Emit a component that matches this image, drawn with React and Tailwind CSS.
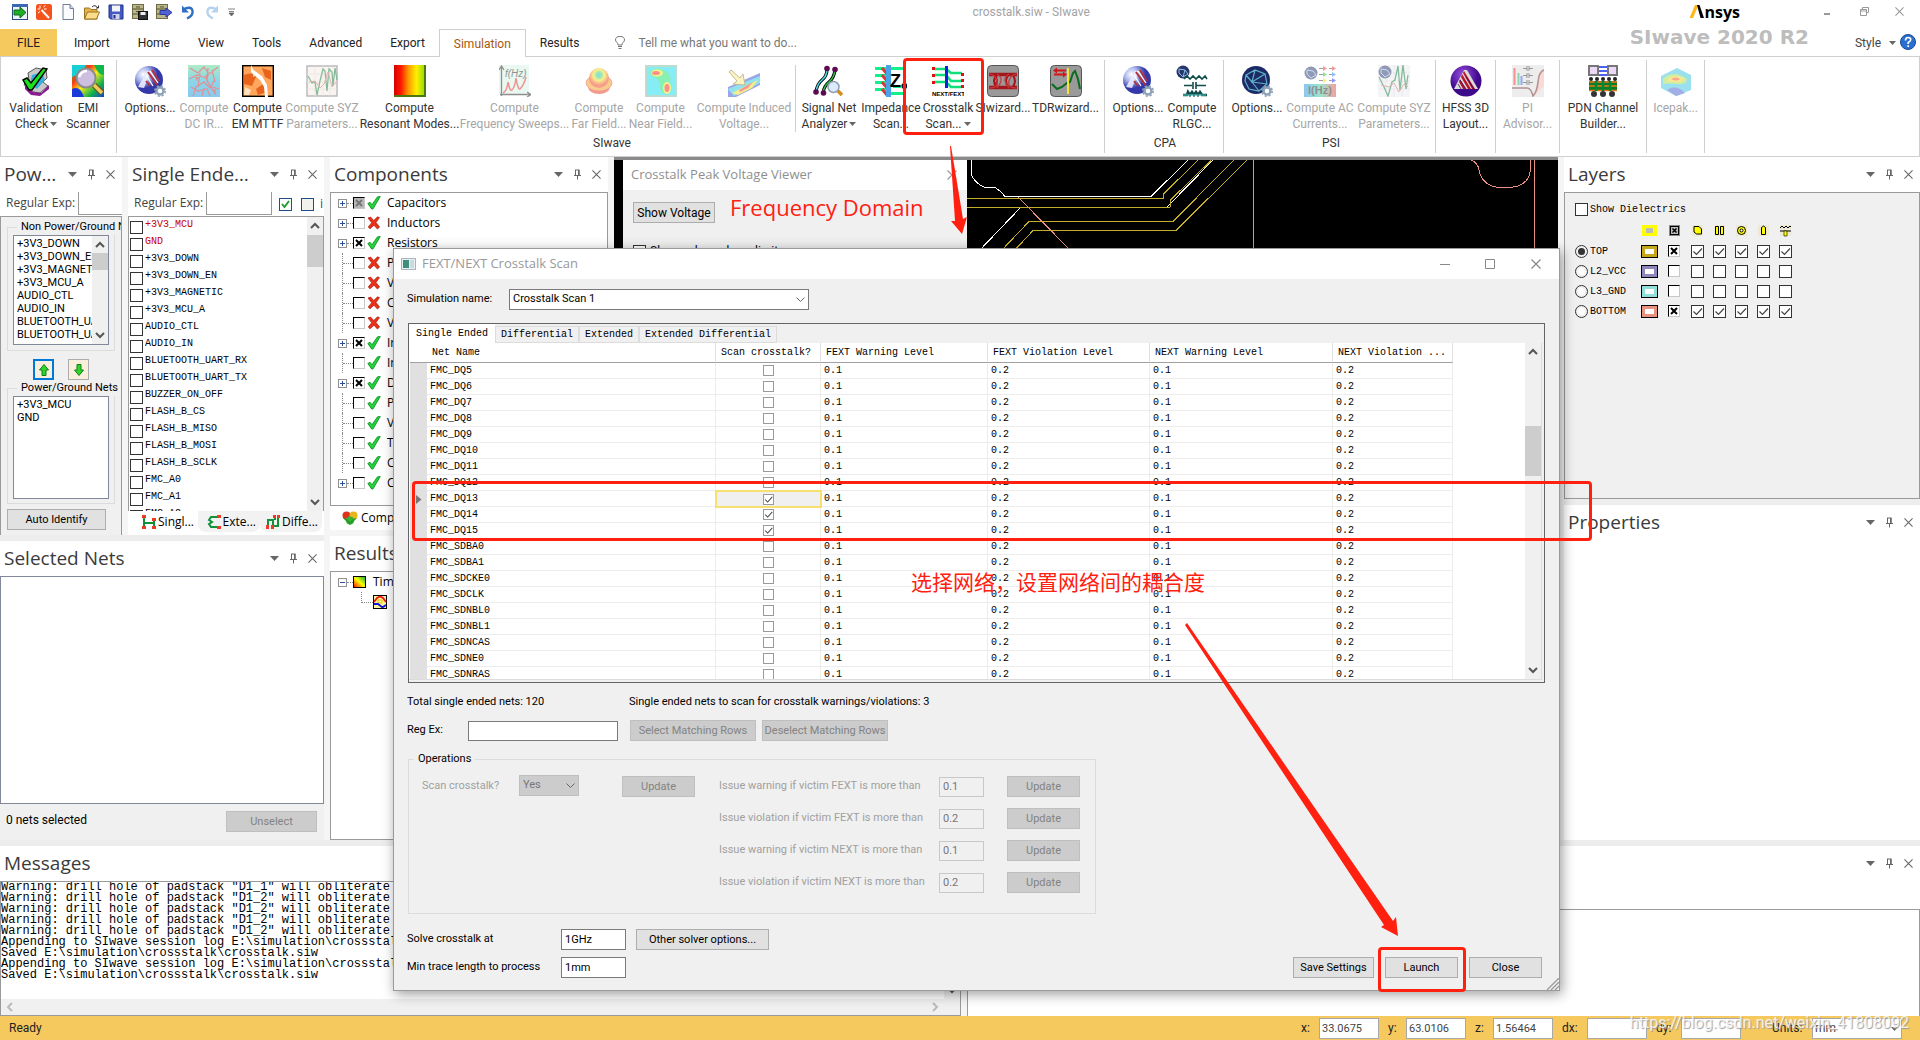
import { useState } from 'react';
import clsx from 'clsx';

const MONO = "font-['Liberation_Mono',monospace] text-[10px]";
const WIDE = "font-['Open_Sans','Noto_Sans_CJK_SC',sans-serif]";
const BTN = 'h-[21px] shrink-0 whitespace-nowrap border border-[#adadad] bg-[#e1e1e1] text-center text-[11px] leading-4 text-black';
const BTN_OFF = 'h-[21px] shrink-0 whitespace-nowrap border border-[#bfbfbf] bg-[#cccccc] text-center text-[11px] leading-4 text-[#838383]';

/* ---------- small icons ---------- */

const Tri = ({ className = 'text-[#666]' }) => (
    <svg width="7" height="4" viewBox="0 0 7 4" className={className}><path d="M0 0h7L3.5 4z" fill="currentColor" /></svg>
);

const Chevron = ({ dir = 'down', className = 'text-[#555]' }) => {
    const d = {
        down: 'M1 3l4 4 4-4',
        up: 'M1 7l4-4 4 4',
        left: 'M7 1L3 5l4 4',
        right: 'M3 1l4 4-4 4',
    }[dir];
    return <svg width="10" height="10" viewBox="0 0 10 10" className={className}><path d={d} fill="none" stroke="currentColor" strokeWidth="2" /></svg>;
};

const ThinChevron = () => (
    <svg width="9" height="6" viewBox="0 0 9 6" className="pointer-events-none absolute right-[4px] top-1/2 -translate-y-1/2"><path d="M.5.5l4 4 4-4" fill="none" stroke="#666" /></svg>
);

const Cross = ({ size = 10, className = 'text-[#666]' }) => (
    <svg width={size} height={size} viewBox="0 0 10 10" className={className}><path d="M.5.5l9 9M9.5.5l-9 9" stroke="currentColor" strokeWidth="1.2" /></svg>
);

const Pin = () => (
    <svg width="9" height="11" viewBox="0 0 9 11"><path d="M2.500 1v5M6 1v5M1 6.500h7M2 1h4.500M4.500 7v3.500" stroke="#666" fill="none" /><path d="M5 1h1.500v5H5z" fill="#666" /></svg>
);

const GreenCheck = () => (
    <svg width="14" height="14" viewBox="0 0 14 14"><path d="M.8 7.500l2.200-1.300L5 8.700 10.500.8l2.800-.3L6 13H4.600z" fill="#1fd43a" stroke="#0b8a1e" strokeWidth=".8" /></svg>
);

const RedCross = () => (
    <svg width="14" height="14" viewBox="0 0 14 14"><path d="M1 2l2.500-1 3.300 3.500L10.500.8l2 .8L9 6.500l3.600 4.500-2.200 2L7 9.200l-4 3.600L1.200 11l3.500-4.300z" fill="#e8301a" stroke="#a91c0c" strokeWidth=".7" /></svg>
);

const ArrowUpDown = ({ down }) => (
    <svg width="14" height="14" viewBox="0 0 14 14" className={clsx(down && 'rotate-180')}><path d="M7 1.500L11.500 7H9v5.500H5V7H2.500z" fill="#2fd32f" stroke="#138013" /></svg>
);

/* ---------- controls ---------- */

const CheckBox = ({ checked = false, label, id, size = 'md' }) => {
    const [on, setOn] = useState(checked);
    return (
        <span className={clsx('relative inline-flex shrink-0', size === 'md' ? 'size-[13px]' : 'size-[11px]')}>
            <input
                id={id}
                type="checkbox"
                aria-label={label}
                checked={on}
                onChange={() => setOn(!on)}
                className={clsx('size-full appearance-none border bg-white', size === 'md' ? 'border-[#333]' : 'border-[#9a9a9a]')}
            />
            {on && (
                <svg viewBox="0 0 13 13" className="pointer-events-none absolute inset-0 size-full"><path d="M2.500 6.500l3 3 5.500-6" fill="none" stroke="#444" strokeWidth="1.200" /></svg>
            )}
        </span>
    );
};

// sunken tick box that shows a bold cross
const XBox = ({ checked = false, dim = false, label }) => {
    const [on, setOn] = useState(checked);
    return (
        <span className="relative inline-flex size-[12px] shrink-0">
            <input
                type="checkbox"
                aria-label={label}
                checked={on}
                onChange={() => setOn(!on)}
                className={clsx('size-full appearance-none border border-b-[#c8c8c8] border-l-black border-r-[#c8c8c8] border-t-black', dim ? 'bg-[#b8b8b8]' : 'bg-white')}
            />
            {on && (
                <svg viewBox="0 0 12 12" className="pointer-events-none absolute inset-0 size-full"><path d="M3 3l6 6M9 3l-6 6" stroke={dim ? '#777' : '#000'} strokeWidth="2" /></svg>
            )}
        </span>
    );
};

const PanelTitle = ({ children }) => (
    <div className="flex h-[35px] shrink-0 items-center bg-white pb-px pl-1 pr-[2px]">
        <h2 className={clsx('mr-[5px] min-w-0 flex-1 truncate text-[19px] leading-7 text-[#3b3b3b]', WIDE)}>{children}</h2>
        <button aria-label="Panel menu" className="flex w-[19px] justify-center"><svg width="9" height="5" viewBox="0 0 9 5"><path d="M0 0h9L4.500 5z" fill="#666" /></svg></button>
        <button aria-label="Pin panel" className="flex w-[19px] justify-center"><Pin /></button>
        <button aria-label="Close panel" className="flex w-[19px] justify-center"><Cross size={9} /></button>
    </div>
);

const VScroll = ({ thumb, className }) => (
    <div className={clsx('flex w-[16px] shrink-0 flex-col items-center bg-[#f0f0f0] py-1', className)}>
        <Chevron dir="up" />
        <div className="flex w-full flex-1 flex-col">{thumb}</div>
        <Chevron dir="down" />
    </div>
);

/* ---------- ribbon icons, 32 x 32 ---------- */

const Svg = ({ children }) => <svg width="32" height="32" viewBox="0 0 32 32">{children}</svg>;

const Gear = () => (
    <g>
        <circle cx="26" cy="26" r="3.500" fill="#fff" stroke="#8fa3b8" strokeWidth="2.500" />
        <circle cx="26" cy="26" r="5.200" fill="none" stroke="#8fa3b8" strokeWidth="1.600" strokeDasharray="2.200 1.900" />
    </g>
);

const ICONS = {
    validation: (
        <Svg>
            <path d="M8 8l8-5 10 2 1 8-4 4 5 4-8 7-12-2-4-7 5-4z" fill="#c9c9c9" stroke="#555" />
            <path d="M5 21l8 6 8 1 8-8v4l-9 7-9-1-6-6z" fill="#8c1a93" />
            <path d="M12 10l10-3 3 8-8 9-7-5z" fill="#3aaedb" />
            <path d="M3 15l4-2 4 5L23 3l4 1-15 21h-3z" fill="#1be01b" stroke="#000" strokeWidth="1.400" />
        </Svg>
    ),
    emi: (
        <Svg>
            <defs>
                <linearGradient id="emiA" x1="0" y1="0" x2="1" y2="1"><stop offset="0" stopColor="#13c53a" /><stop offset=".3" stopColor="#ff3b12" /><stop offset=".5" stopColor="#f5ee1d" /><stop offset=".75" stopColor="#12b34a" /><stop offset="1" stopColor="#143fd1" /></linearGradient>
            </defs>
            <rect width="32" height="32" fill="url(#emiA)" />
            <path d="M0 0h14l-4 8-10 4z" fill="#19cfd6" /><path d="M0 24q8-4 12 8H0z" fill="#1a39d8" /><path d="M22 0h10v10q-6 0-10-10z" fill="#10b84b" />
            <path d="M22 20l8 8" stroke="#6b5413" strokeWidth="6" /><path d="M22 20l8 8" stroke="#f0c95b" strokeWidth="3.500" />
            <circle cx="14" cy="13" r="9.500" fill="#cdbfe0" stroke="#8b8b8b" strokeWidth="2" />
            <path d="M7 12q2-6 8-6" stroke="#fff" strokeWidth="2.500" fill="none" />
        </Svg>
    ),
    options: (
        <Svg>
            <defs><radialGradient id="optA" cx=".3" cy=".3"><stop offset="0" stopColor="#fff" /><stop offset=".5" stopColor="#aab6ec" /><stop offset="1" stopColor="#3438a8" /></radialGradient></defs>
            <circle cx="15" cy="15" r="14" fill="url(#optA)" />
            <path d="M4 22L13 6l4 0-7 17z" fill="#e9ecff" opacity=".9" />
            <path d="M14 7l9 13M18 5l7 11" stroke="#b3323b" strokeWidth="2" /><path d="M12 10l7 11M16 6l8 12" stroke="#fff" strokeWidth="1.300" />
            <path d="M12 16l4 5" stroke="#b3323b" strokeWidth="2" />
            <Gear />
        </Svg>
    ),
    dcir: (
        <Svg>
            <defs><linearGradient id="dcA" x1="0" y1="0" x2="0" y2="1"><stop offset="0" stopColor="#5fd98f" /><stop offset=".5" stopColor="#1aaed0" /><stop offset="1" stopColor="#1797df" /></linearGradient></defs>
            <rect width="32" height="32" fill="url(#dcA)" />
            <path d="M2 3l8 5 6-6 5 7 9-7M1 14l8-4 9 3 4 8 9 3M5 31l3-9 8-5 6 6 5-9M12 8l-2 14M20 3l-1 13 9 14M3 22l7 4 9-2 3 7M14 31l2-8M24 5l3 12" fill="none" stroke="#c9222d" strokeWidth="1.200" />
            <path d="M7 12l2 4 2-4zM17 10l2 4 2-4zM24 25l3 4 1-5z" fill="#c9222d" />
        </Svg>
    ),
    mttf: (
        <Svg>
            <rect x=".7" y=".7" width="30.600" height="30.600" fill="#ffa75c" stroke="#000" strokeWidth="1.400" />
            <path d="M2 10q8-4 12 2l-4 9-8-2zM20 3l9 3v9l-6-3zM14 24l7-5 4 8-9 3z" fill="#e8641c" /><path d="M3 22l6 3-2 5H2zM12 5l5 4-6 3z" fill="#ffe2c2" />
            <path d="M9 0l3 6 8 5 5 9 1 12h-3l-1-10-4-7-9-8V0z" fill="#fff" />
        </Svg>
    ),
    syz: (
        <Svg>
            <rect x="1" y="1" width="30" height="30" fill="#f4ebe4" stroke="#777" strokeWidth="1.500" />
            <path d="M1 9h30M1 17h30M1 24h30M9 1v30M17 1v30M24 1v30" stroke="#d9cfc6" strokeWidth=".7" />
            <path d="M2 11l4 7 3-1 2 13 3-14 3-12 2 2 2 20 2-22 3 3 1 14 2-18 2 12" fill="none" stroke="#0c7a33" strokeWidth="1.300" />
            <path d="M3 17l6-1 5 7 4-4 4-12 4 15 5-6" fill="none" stroke="#c66" />
        </Svg>
    ),
    resonant: (
        <Svg>
            <defs><linearGradient id="resA"><stop offset="0" stopColor="#d60000" /><stop offset=".22" stopColor="#ff1a00" /><stop offset=".45" stopColor="#ff9a00" /><stop offset=".7" stopColor="#fff000" /><stop offset="1" stopColor="#86d800" /></linearGradient></defs>
            <rect width="32" height="32" fill="url(#resA)" />
            <path d="M31 0v32M0 31h32" stroke="#4b7a12" strokeWidth="2" />
        </Svg>
    ),
    freq: (
        <Svg>
            <rect width="30" height="30" fill="#d4f5e4" />
            <path d="M2.500 31V2M1 29.500h30M0 5l2.500-4L5 5M28 27l4 2.500-4 2.500" fill="none" stroke="#222" strokeWidth="1.300" />
            <path d="M4 28q4-2 5-11 2 10 4 8 3-3 4-12 2 12 4 11 4-4 6-12" fill="none" stroke="#e8262a" strokeWidth="1.500" />
            <text x="6" y="12" className="font-['Liberation_Sans',sans-serif] text-[10px] italic" fill="#222">f(Hz)</text>
        </Svg>
    ),
    far: (
        <Svg>
            <defs><radialGradient id="farA" cx=".5" cy=".35"><stop offset="0" stopColor="#2aa9e0" /><stop offset=".25" stopColor="#2bd36d" /><stop offset=".55" stopColor="#f6e31b" /><stop offset="1" stopColor="#f0401a" /></radialGradient></defs>
            <ellipse cx="16" cy="22" rx="11" ry="7" fill="#e8391d" />
            <ellipse cx="16" cy="18" rx="13" ry="8" fill="#f59a1c" stroke="#d33" strokeWidth=".7" />
            <circle cx="16" cy="13" r="10" fill="url(#farA)" />
        </Svg>
    ),
    near: (
        <Svg>
            <rect width="32" height="32" fill="#7fb8a0" /><rect x="2" y="2" width="28" height="28" fill="#10dcf0" />
            <path d="M4 7q8-7 18 0 5 4 3 10 4 10-3 12-8 0-7-10-2-6-9-8z" fill="#16e36a" />
            <ellipse cx="12" cy="8" rx="6" ry="3.500" fill="#f0e51e" /><ellipse cx="11" cy="8" rx="4" ry="2" fill="#f02a1a" />
            <ellipse cx="22" cy="23" rx="4" ry="6" fill="#f0e51e" /><ellipse cx="22" cy="23" rx="2.500" ry="4" fill="#f02a1a" />
        </Svg>
    ),
    induced: (
        <Svg>
            <path d="M0 22L32 8v12L8 32H0z" fill="#3c4fd0" /><path d="M0 24l32-13v7L6 31z" fill="#23c9dd" /><path d="M4 28l26-13-6 8-14 7z" fill="#f3dd1c" /><path d="M11 25l14-8-5 6-8 4z" fill="#ef3a1a" />
            <path d="M1 7l2-2 9 8 3-4 2 11-12-1 4-3z" fill="#fbe98c" stroke="#8c7a22" />
        </Svg>
    ),
    signal: (
        <Svg>
            <path d="M14 4q0 7-5 11T3 27M22 5q-1 8-6 12t-6 11" fill="none" stroke="#000" strokeWidth="3.200" />
            <path d="M14 4q0 7-5 11T3 27" fill="none" stroke="#4ed9e0" strokeWidth="1.600" /><path d="M22 5q-1 8-6 12t-6 11" fill="none" stroke="#2fbf4a" strokeWidth="1.600" />
            <circle cx="14" cy="3.500" r="2.800" fill="#5b0a52" /><circle cx="22" cy="4.500" r="2.800" fill="#5b0a52" /><circle cx="3" cy="27" r="2.800" fill="#5b0a52" /><circle cx="10.500" cy="28" r="2.800" fill="#5b0a52" />
            <path d="M24 25l5 5" stroke="#d58c1d" strokeWidth="3.500" /><circle cx="20.500" cy="22" r="5.500" fill="#dcebfb" stroke="#8ea0b5" strokeWidth="1.500" />
        </Svg>
    ),
    impedance: (
        <Svg>
            <path d="M0 3.500h30M0 10.500h12M0 17.500h12M0 24.500h12M16 28.500h14M18 21.500h8" stroke="#10f08c" strokeWidth="3" />
            <path d="M7 3l6 7M7 10l6 7M7 17l6 7M7 24l5 6" stroke="#d33a3a" strokeWidth="3" />
            <rect x="11" y="0" width="5" height="32" fill="#4aa3e6" />
            <text x="15" y="22" className="font-['Liberation_Sans',sans-serif] text-[18px] font-bold" fill="#000">Z</text>
            <text x="26" y="24" className="font-['Liberation_Sans',sans-serif] text-[11px] font-bold" fill="#000">o</text>
        </Svg>
    ),
    crosstalk: (
        <Svg>
            <path d="M2 4h12l5 4h11M2 10h12l5 6h11M2 17h12l5 5h11" fill="none" stroke="#10e07c" strokeWidth="2.600" />
            <rect x="13" y="1" width="3" height="22" fill="#1020e0" />
            <path d="M0 2h3v3H0zM0 9h3v3H0zM0 16h3v3H0zM29 8h3v3h-3zM29 14h3v3h-3zM29 20h3v3h-3z" fill="#e01010" />
            <text x="0" y="31" className="font-['Liberation_Sans',sans-serif] text-[6px] font-bold" fill="#000">NEXT/FEXT</text>
        </Svg>
    ),
    siwizard: (
        <Svg>
            <rect x=".5" y=".5" width="31" height="31" rx="4" fill="#9a9a9a" stroke="#555" />
            <path d="M2 9.500h28M2 22.500h28" stroke="#a3161b" strokeWidth="3.500" />
            <path d="M7 9q6 7 0 14M10 9q-6 7 0 14M22 9q-6 7 0 14M25 9q6 7 0 14" fill="none" stroke="#a3161b" strokeWidth="2" />
            <path d="M2 9q6 0 8 7t-8 7M30 9q-6 0-8 7t8 7M10 9q5 3 4 7t-4 7M22 9q-5 3-4 7t4 7" fill="none" stroke="#c8383c" strokeWidth="1.200" />
        </Svg>
    ),
    tdr: (
        <Svg>
            <rect x=".5" y=".5" width="31" height="31" rx="4" fill="#9a9a9a" stroke="#555" />
            <path d="M2 19l5 5 5-2 5-4 3-1 3-9 2-2 3 8 2 10" fill="none" stroke="#0a6b1c" strokeWidth="2" />
            <path d="M18 3v26" stroke="#f5e23a" strokeWidth="2" />
            <path d="M6 5.500h10M4 9.500h10" stroke="#d11515" strokeWidth="2" /><path d="M7 2.500v6L3 5.500zM13 6.500v6l4-3z" fill="#d11515" />
        </Svg>
    ),
    rlgc: (
        <Svg>
            <circle cx="7" cy="7" r="6.500" fill="#26356b" /><path d="M3 4l6 1 3 4-5 3-4-4zM9 5l-2 7" fill="none" stroke="#8fc3e8" />
            <path d="M8 14l3-3 3 3 3-3 3 3 3-3 3 3 3-3 2 3M8 20.500h8M20 20.500h10M17 17v7M20 17v7" fill="none" stroke="#114b4b" strokeWidth="1.600" />
            <path d="M7 30h4l1-3 2 3 2-3 2 3 2-3 2 3 2-3 2 3h5" fill="none" stroke="#114b4b" strokeWidth="2.600" /><path d="M7 30h23" stroke="#54cfc4" />
        </Svg>
    ),
    psiOptions: (
        <Svg>
            <circle cx="15" cy="15" r="14" fill="#1c2a66" />
            <path d="M5 10l9-5 10 4 2 10-8 7-10-2-4-8zM14 5l-3 12 13-8M11 17l7 9M11 17l15 2M11 17l-6-7" fill="none" stroke="#5fb3c8" strokeWidth="1.200" />
            <Gear />
        </Svg>
    ),
    accur: (
        <Svg>
            <circle cx="7" cy="8" r="6.500" fill="#26356b" /><path d="M3 5l6 1 3 4-5 3-4-4z" fill="none" stroke="#8fc3e8" />
            <path d="M15 3.500h6M15 9.500h6M15 15.500h6M25 3.500h5M25 9.500h5M25 15.500h5" stroke="#444" />
            <path d="M19 1l4 2.500L19 6zM28 1l4 2.500L28 6z" fill="#e33" /><path d="M19 7l4 2.500-4 2.500z" fill="#1c3" /><path d="M28 7l4 2.500-4 2.500z" fill="#28e" /><path d="M19 13l4 2.500-4 2.500z" fill="#fd0" /><path d="M28 13l4 2.500-4 2.500z" fill="#23e" />
            <defs><linearGradient id="acA"><stop offset="0" stopColor="#1e90e0" /><stop offset=".5" stopColor="#3c9" /><stop offset="1" stopColor="#e44" /></linearGradient></defs>
            <rect y="19" width="32" height="13" fill="url(#acA)" />
            <text x="4" y="29" className="font-['Liberation_Sans',sans-serif] text-[11px] font-bold" fill="#222">I(Hz)</text>
        </Svg>
    ),
    psiSyz: (
        <Svg>
            <rect width="32" height="32" fill="#ececf2" /><path d="M0 8h32M0 16h32M0 24h32M8 0v32M16 0v32M24 0v32" stroke="#ccd" strokeWidth=".7" />
            <path d="M1 12l5 10 4 9 4-14 3-2 3-14 2 24 3-25 3 24 2-14" fill="none" stroke="#0c7a33" strokeWidth="1.300" /><path d="M3 20l8 2 5-4 5 9 5-8 4 3" fill="none" stroke="#c66" />
            <circle cx="7" cy="7" r="6.500" fill="#26356b" /><path d="M3 4l6 1 3 4-5 3-4-4z" fill="none" stroke="#8fc3e8" />
        </Svg>
    ),
    hfss: (
        <Svg>
            <defs><radialGradient id="hfA" cx=".4" cy=".3"><stop offset="0" stopColor="#9c4fe0" /><stop offset="1" stopColor="#3d0a8c" /></radialGradient></defs>
            <circle cx="16" cy="16" r="15.500" fill="url(#hfA)" />
            <path d="M4 24L14 5h3l11 19z" fill="#dcdcdc" />
            <path d="M10 14l6 10h-3l-4-7zM12 9l9 15h-3l-7-12zM14 6l11 18h-3L13 8z" fill="#b9152a" />
            <path d="M8 19l3 5M16 12l8 12M10 15l6 9" stroke="#3d0a5c" strokeWidth=".8" />
        </Svg>
    ),
    pi: (
        <Svg>
            <rect width="32" height="32" fill="#dcdcdc" /><path d="M2.500 3v17" stroke="#e22" strokeWidth="2" /><path d="M6.500 8v12" stroke="#2a6" strokeWidth="2" /><path d="M9.500 11v9" stroke="#25e" strokeWidth="2" />
            <path d="M11 3.500h4M17 3.500h4M15 1v5M17 1v5M11 10.500h4M17 10.500h4M15 8v5M17 8v5M11 17.500h4M17 17.500h4M15 15v5M17 15v5" stroke="#333" />
            <path d="M32 3q-6 2-6 14l-4 14 10-10z" fill="#f3b7b0" /><path d="M0 23h15q4 0 6 8 4-4 5-14t6-12" fill="none" stroke="#6b2a2a" strokeWidth="1.600" />
        </Svg>
    ),
    pdn: (
        <Svg>
            <rect x="2" y="1" width="9" height="9" fill="#ecd9f7" stroke="#777" strokeWidth="2" /><rect x="21" y="1" width="9" height="9" fill="#ecd9f7" stroke="#777" strokeWidth="2" />
            <path d="M12 2h8M12 6h8M12 10h8" stroke="#1430e8" strokeWidth="1.600" />
            <path d="M4 14h.01M10 14h.01M16 14h.01M22 14h.01M28 14h.01" stroke="#222" strokeWidth="4" strokeLinecap="round" />
            <rect x="2" y="16" width="28" height="10" fill="#0b7d25" /><path d="M2 17h28M2 21h28M2 25.500h28" stroke="#f07a1a" strokeWidth="1.400" /><path d="M9 16v10M16 16v10M23 16v10" stroke="#083" strokeWidth="2.500" />
            <circle cx="7" cy="29" r="3" fill="#333" /><circle cx="16" cy="29" r="3" fill="#333" /><circle cx="25" cy="29" r="3" fill="#333" />
        </Svg>
    ),
    icepak: (
        <Svg>
            <path d="M17 3l14 7v15l-15 6-15-8V11z" fill="#39c3df" /><path d="M3 14q10-10 24 0 0 6-10 5T3 19z" fill="#9fdf4a" /><path d="M8 14q8-6 16 0-2 4-8 3t-8 0z" fill="#f7d02a" /><path d="M11 14q5-3 9 0-3 3-9 0z" fill="#f0502a" /><path d="M7 25q9-6 18 3l-9 3z" fill="#4a5fd0" />
        </Svg>
    ),
};

const RIBBON = [
    {
        pad: 'pl-[7px] pr-1',
        items: [
            { icon: 'validation', a: 'Validation', b: 'Check', drop: true, w: 'w-[56px]' },
            { icon: 'emi', a: 'EMI', b: 'Scanner', w: 'w-[48px]' },
        ],
    },
    {
        name: 'SIwave',
        pad: 'pl-[6px] pr-[3px]',
        items: [
            { icon: 'options', a: 'Options...', w: 'w-[54px]' },
            { icon: 'dcir', a: 'Compute', b: 'DC IR...', off: true, w: 'w-[54px]' },
            { icon: 'mttf', a: 'Compute', b: 'EM MTTF', w: 'w-[53px]' },
            { icon: 'syz', a: 'Compute SYZ', b: 'Parameters...', off: true, w: 'w-[76px]' },
            { icon: 'resonant', a: 'Compute', b: 'Resonant Modes...', w: 'w-[99px]' },
            { icon: 'freq', a: 'Compute', b: 'Frequency Sweeps...', off: true, w: 'w-[111px]' },
            { icon: 'far', a: 'Compute', b: 'Far Field...', off: true, w: 'w-[58px]' },
            { icon: 'near', a: 'Compute', b: 'Near Field...', off: true, w: 'w-[65px]' },
            { icon: 'induced', a: 'Compute Induced', b: 'Voltage...', off: true, w: 'w-[102px]', bar: true },
            { icon: 'signal', a: 'Signal Net', b: 'Analyzer', drop: true, w: 'w-[66px]' },
            { icon: 'impedance', a: 'Impedance', b: 'Scan...', w: 'w-[58px]' },
            { icon: 'crosstalk', a: 'Crosstalk', b: 'Scan...', drop: true, w: 'w-[56px]' },
            { icon: 'siwizard', a: 'SIwizard...', w: 'w-[54px]' },
            { icon: 'tdr', a: 'TDRwizard...', w: 'w-[71px]' },
        ],
    },
    {
        name: 'CPA',
        pad: 'pl-[6px] pr-1',
        items: [
            { icon: 'options', a: 'Options...', w: 'w-[54px]' },
            { icon: 'rlgc', a: 'Compute', b: 'RLGC...', w: 'w-[54px]' },
        ],
    },
    {
        name: 'PSI',
        pad: 'pl-[6px] pr-[3px]',
        items: [
            { icon: 'psiOptions', a: 'Options...', w: 'w-[54px]' },
            { icon: 'accur', a: 'Compute AC', b: 'Currents...', off: true, w: 'w-[72px]' },
            { icon: 'psiSyz', a: 'Compute SYZ', b: 'Parameters...', off: true, w: 'w-[76px]' },
        ],
    },
    { pad: 'px-[3px]', items: [{ icon: 'hfss', a: 'HFSS 3D', b: 'Layout...', w: 'w-[53px]' }] },
    { pad: 'px-1', items: [{ icon: 'pi', a: 'PI', b: 'Advisor...', off: true, w: 'w-[55px]' }] },
    { pad: 'px-[5px]', items: [{ icon: 'pdn', a: 'PDN Channel', b: 'Builder...', w: 'w-[76px]' }] },
    { pad: 'px-1', items: [{ icon: 'icepak', a: 'Icepak...', off: true, w: 'w-[49px]' }] },
];

const RibbonButton = ({ item }) => (
    <button
        disabled={item.off}
        className={clsx('flex shrink-0 flex-col items-center whitespace-nowrap text-[12px] leading-4', item.w, item.off ? 'text-[#a6a6a6]' : 'text-[#333]')}
    >
        <span className={clsx(item.off && 'opacity-50')}>{ICONS[item.icon]}</span>
        <span className="mt-[3px]">{item.a}</span>
        <span className="flex h-4 items-center gap-[2px]">
            {item.b}
            {item.drop && <Tri />}
        </span>
    </button>
);

const Ribbon = () => (
    <div className="flex h-[100px] shrink-0 border-x border-b border-[#cfcfcf] bg-white pt-[3px]">
        {RIBBON.map((group, i) => (
            <div key={i} className={clsx('mb-[3px] flex flex-col border-r border-[#cfcfcf] pt-[5px]', group.pad)}>
                <div className="flex">
                    {group.items.map((item, k) => (
                        <div key={k} className={clsx('flex', item.bar && 'border-r border-[#cfcfcf]')}>
                            <RibbonButton item={item} />
                        </div>
                    ))}
                </div>
                {group.name && <div className="mt-[3px] text-center text-[12px] leading-4 text-[#333]">{group.name}</div>}
            </div>
        ))}
    </div>
);

/* ---------- header ---------- */

const QUICK = [
    ['Open project', <svg width="16" height="16" viewBox="0 0 16 16"><rect x=".5" y=".5" width="15" height="15" fill="#eef3fb" stroke="#274a86" /><path d="M0 1.500h16" stroke="#3b68b5" strokeWidth="3" /><path d="M2 6h6V3l6 5.500L8 14v-3H2z" fill="#1fae2a" stroke="#0a6d12" /></svg>],
    ['Wizard', <svg width="16" height="16" viewBox="0 0 16 16"><rect width="16" height="16" rx="2.500" fill="#f4541c" /><path d="M5.500 6L13 14" stroke="#fff" strokeWidth="2" /><path d="M4 1.500v3M1.500 5h2.500M7.500 3l2-1.500M2 9l2-1.500M8 5h2.500" stroke="#fff" /></svg>],
    ['New', <svg width="16" height="16" viewBox="0 0 16 16"><path d="M3 .5h7l3.500 4v11H3z" fill="#fbfcff" stroke="#6f7d95" /><path d="M10 .5v4h3.500" fill="#cfd9ea" stroke="#6f7d95" /></svg>],
    ['Open', <svg width="16" height="16" viewBox="0 0 16 16"><path d="M.5 4h5l1.500 1.500h6V15H.5z" fill="#e6b34a" stroke="#9a7220" /><path d="M3.500 8H15.500l-3 7H.5z" fill="#fbdc8a" stroke="#9a7220" /><path d="M8 3q3-3 6 1M12 4h2.500V1.500" fill="none" stroke="#333" /></svg>],
    ['Save', <svg width="16" height="16" viewBox="0 0 16 16"><path d="M1 1h14v14H2.500L1 13.500z" fill="#4658c4" stroke="#20307e" /><rect x="4" y="1.500" width="8" height="6" fill="#f2f4fb" /><rect x="4.500" y="10" width="7" height="5" fill="#cfd4ea" /><rect x="5.500" y="11" width="2" height="3.500" fill="#20307e" /></svg>],
    ['Save archive', <svg width="16" height="16" viewBox="0 0 16 16"><rect x=".5" y=".5" width="11" height="14" fill="#b9b68a" stroke="#6f6d45" /><path d="M.5 5h11M.5 10h11M4 3h4M4 7.500h4" stroke="#55532f" /><rect x="6.500" y="7.500" width="9" height="8" fill="#333" stroke="#111" /><rect x="8.500" y="8" width="5" height="3" fill="#eee" /></svg>],
    ['Export archive', <svg width="16" height="16" viewBox="0 0 16 16"><rect x=".5" y=".5" width="11" height="14" fill="#b9b68a" stroke="#6f6d45" /><path d="M.5 5h11M.5 10h11M4 3h4" stroke="#55532f" /><path d="M4 6.500h6V4l6 4.500-6 4.500v-2.500H4z" fill="#4f63d6" stroke="#2c3a95" /></svg>],
    ['Undo', <svg width="16" height="16" viewBox="0 0 16 16"><path d="M3 5.500q8-4 9.500 1 1 5-5.500 8" fill="none" stroke="#2f6fc4" strokeWidth="2.400" /><path d="M2 1.500v7h7z" fill="#2f6fc4" /></svg>],
    ['Redo', <svg width="16" height="16" viewBox="0 0 16 16"><path d="M13 5.500q-8-4-9.500 1-1 5 5.500 8" fill="none" stroke="#b7d2ee" strokeWidth="2.400" /><path d="M14 1.500v7H7z" fill="#b7d2ee" /></svg>],
];

const TABS = ['Import', 'Home', 'View', 'Tools', 'Advanced', 'Export', 'Simulation', 'Results'];

const Header = () => (
    <header className="shrink-0 bg-white">
        <div className="flex h-[29px] items-center pb-[6px]">
            <div className="flex flex-[54] basis-0 items-center gap-2 pl-3">
                {QUICK.map(([label, icon]) => <button key={label} aria-label={label}>{icon}</button>)}
                <button aria-label="Customize">
                    <svg width="7" height="8" viewBox="0 0 7 8"><path d="M0 1h7M1 3.500h5M1 5h5L3.500 8z" stroke="#666" strokeWidth=".8" fill="#666" /></svg>
                </button>
            </div>
            <h1 className="text-[12px] text-[#a3a3a3]">crosstalk.siw - SIwave</h1>
            <div className="flex flex-[46] basis-0 items-center justify-end pr-3">
                <span className="flex items-center pr-[84px] text-black">
                    <svg width="15" height="13" viewBox="0 0 15 13"><path d="M6 0h3.500L4 13H.5z" fill="#ffb71b" /><path d="M8 0h2.500l4.500 13h-3.500z" fill="#000" /></svg>
                    <span className={clsx('text-[16px] font-bold leading-4', WIDE)}>nsys</span>
                </span>
                <button aria-label="Minimize" className="mt-1 h-[2px] w-[6px] bg-[#999]" />
                <button aria-label="Restore" className="ml-[30px]"><svg width="9" height="9" viewBox="0 0 9 9"><path d="M2.500 2.500v-2h6v5h-2M.5 2.500h6v6h-6zM.5 4h6" fill="none" stroke="#999" /></svg></button>
                <button aria-label="Close" className="ml-[26px] mr-1"><Cross size={9} className="text-[#999]" /></button>
            </div>
        </div>
        <nav className="flex h-[28px] items-stretch border-b border-[#cfcfcf] text-[12px]">
            <button className="w-[57px] bg-[#f6c95f] text-[#222]">FILE</button>
            <div className="flex pl-[3px]">
                {TABS.map((t) => (
                    <button
                        key={t}
                        className={clsx('px-[14px]', t === 'Simulation' ? 'relative -mb-px border border-b-0 border-[#cfcfcf] bg-white text-[#a8590c]' : 'text-[#222]')}
                    >
                        {t}
                    </button>
                ))}
            </div>
            <label htmlFor="tellme" className="ml-[22px] flex items-center">
                <svg width="10" height="13" viewBox="0 0 10 13" aria-label="Hint"><path d="M3 9q0-1.500-1-2.500Q.5 5 .5 4a4.400 3.500 0 0 1 9 0q0 1-1.500 2.500-1 1-1 2.500zM3 10.500h4M3.500 12.500h3" fill="none" stroke="#777" /></svg>
            </label>
            <input id="tellme" placeholder="Tell me what you want to do..." className="ml-[13px] w-[200px] placeholder:text-[#777]" />
            <div className="ml-auto flex items-start pr-1">
                <strong className="mr-[46px] font-['DejaVu_Sans',sans-serif] text-[20px] font-bold leading-4 text-[#bdbdbd]">SIwave 2020 R2</strong>
                <button className="mt-[6px] flex items-center gap-2 leading-4 text-[#444]">Style <Tri /></button>
                <button aria-label="Help" className="ml-1 mt-[5px]">
                    <svg width="16" height="16" viewBox="0 0 16 16"><circle cx="8" cy="8" r="7.500" fill="#2a6fd0" stroke="#1a4a96" /><path d="M5.500 6.500q0-3 2.700-3t2.500 2.300Q10.600 7 8.200 8.500V10M8.200 11.200V13" fill="none" stroke="#fff" strokeWidth="1.700" /></svg>
                </button>
            </div>
        </nav>
    </header>
);

/* ---------- left panels ---------- */

const NON_POWER = ['+3V3_DOWN', '+3V3_DOWN_EN', '+3V3_MAGNETIC', '+3V3_MCU_A', 'AUDIO_CTL', 'AUDIO_IN', 'BLUETOOTH_UART_RX', 'BLUETOOTH_UART_TX'];

const NETS = [
    '+3V3_MCU', 'GND', '+3V3_DOWN', '+3V3_DOWN_EN', '+3V3_MAGNETIC', '+3V3_MCU_A', 'AUDIO_CTL', 'AUDIO_IN',
    'BLUETOOTH_UART_RX', 'BLUETOOTH_UART_TX', 'BUZZER_ON_OFF', 'FLASH_B_CS', 'FLASH_B_MISO', 'FLASH_B_MOSI',
    'FLASH_B_SCLK', 'FMC_A0', 'FMC_A1', 'FMC_A2',
];

const PowerPanel = () => (
    <section className="flex w-[122px] shrink-0 flex-col overflow-hidden bg-white">
        <PanelTitle>Power/Ground Nets</PanelTitle>
        <div className={clsx('flex h-[24px] shrink-0 text-[12px] text-[#444]', WIDE)}>
            <label htmlFor="pg-exp" className="w-[78px] shrink-0 whitespace-nowrap pl-[6px] leading-[22px]">Regular Exp:</label>
            <input id="pg-exp" className="mb-[1px] min-w-0 flex-1 border-b border-l border-[#9a9a9a]" />
        </div>
        <div className="flex min-h-0 flex-1 flex-col overflow-hidden border border-b-0 border-[#9a9a9a] bg-[#f0f0f0] pl-[6px] pr-[6px] pt-[2px] text-[11px]">
            <fieldset className="h-[132px] min-w-0 border border-[#dcdcdc] px-[5px]">
                <legend className="ml-1 whitespace-nowrap px-1 leading-4">Non Power/Ground Nets</legend>
                <div className="flex h-[110px] border border-[#82879a] bg-white">
                    <ul className="min-w-0 flex-1 overflow-hidden whitespace-nowrap pl-[3px] pt-px leading-[13px]">
                        {NON_POWER.map((n) => <li key={n}>{n}</li>)}
                    </ul>
                    <VScroll thumb={<div className="mt-[3px] h-[17px] bg-[#cdcdcd]" />} />
                </div>
            </fieldset>
            <div className="mt-[8px] flex gap-[14px] pl-[26px]">
                <button aria-label="Move up" className="flex size-[21px] items-center justify-center border-2 border-[#0078d7] bg-[#faeedd]"><ArrowUpDown /></button>
                <button aria-label="Move down" className="flex size-[21px] items-center justify-center border border-[#adadad] bg-[#faeedd]"><ArrowUpDown down /></button>
            </div>
            <fieldset className="h-[124px] min-w-0 border border-[#dcdcdc] px-[5px]">
                <legend className="ml-1 whitespace-nowrap px-1 leading-4">Power/Ground Nets</legend>
                <ul className="h-[103px] border border-[#82879a] bg-white pl-[3px] pt-px leading-[13px]">
                    <li>+3V3_MCU</li>
                    <li>GND</li>
                </ul>
            </fieldset>
            <button className={clsx(BTN, 'mt-[5px] w-[99px]')}>Auto Identify</button>
        </div>
    </section>
);

const NetTabIcon = ({ kind }) => (
    <svg width="14" height="14" viewBox="0 0 14 14">
        <path d={{ single: 'M2 2v10M12 5v7M2 8h10', ext: 'M12 2H4L2 5l3 2-3 2 2 3h8', diff: 'M2 12V5h5v6h5V2M9 2V5' }[kind]} fill="none" stroke="#12913a" strokeWidth="2" />
        <path d={{ single: 'M0 0h4v3H0zM0 11h4v3H0zM10 3h4v3h-4zM10 11h4v3h-4z', ext: 'M10 0h4v3h-4zM10 11h4v3h-4z', diff: 'M7 0h3v3H7zM11 0h3v3h-3zM0 10h3v4H0zM5 10h3v4H5z' }[kind]} fill="#ee3a22" />
    </svg>
);

const NetsPanel = () => (
    <section className="flex min-w-0 flex-1 flex-col bg-white">
        <PanelTitle>Single Ended Nets</PanelTitle>
        <div className={clsx('flex h-[24px] shrink-0 text-[12px] text-[#444]', WIDE)}>
            <label htmlFor="se-exp" className="w-[78px] shrink-0 whitespace-nowrap pl-[6px] leading-[22px]">Regular Exp:</label>
            <input id="se-exp" className="mb-[1px] w-[66px] border-x border-b border-[#9a9a9a]" />
            <button aria-label="Select all" className="ml-[7px] mt-[6px] flex size-[13px] items-center justify-center border border-[#1d4f86] bg-white">
                <svg width="9" height="9" viewBox="0 0 9 9"><path d="M1 4l2.500 3L8 1" fill="none" stroke="#1b9b28" strokeWidth="1.800" /></svg>
            </button>
            <button aria-label="Clear all" className="ml-[9px] mt-[6px] size-[13px] border border-[#1d4f86] bg-[#f3f1ec]" />
            <span className="ml-[6px] w-[3px] overflow-hidden leading-6 text-[#1d4f86]">i</span>
        </div>
        <div className="flex min-h-0 flex-1 border border-b-0 border-[#9a9a9a]">
            <ul className={clsx('min-w-0 flex-1 overflow-hidden pl-px', MONO)}>
                {NETS.map((n, i) => (
                    <li key={n} className="flex h-[17px] items-end gap-[2px]">
                        <CheckBox id={`net-${n}`} />
                        <label htmlFor={`net-${n}`} className={clsx('self-start leading-4', i < 2 ? 'text-[#c80000]' : 'text-black')}>{n}</label>
                    </li>
                ))}
            </ul>
            <VScroll thumb={<div className="mt-[4px] h-[32px] bg-[#cdcdcd]" />} />
        </div>
        <div className={clsx('flex h-[24px] shrink-0 pl-2 text-[12px]', WIDE)}>
            {[['single', 'Singl...'], ['ext', 'Exte...'], ['diff', 'Diffe...']].map(([kind, t], i) => (
                <button key={kind} className={clsx('mb-[3px] flex w-[62px] items-center justify-end gap-[2px] rounded-b-lg pr-1', i > 0 && 'bg-[#f2f2f2]')}>
                    <NetTabIcon kind={kind} />
                    {t}
                </button>
            ))}
        </div>
    </section>
);

const SelectedNets = () => (
    <section className="flex min-h-0 flex-1 flex-col bg-[#f0f0f0]">
        <PanelTitle>Selected Nets</PanelTitle>
        <div className="flex-1 border border-[#82879a] bg-white" />
        <div className="flex h-[36px] shrink-0 items-start justify-between pl-[6px] pr-[7px] pt-[7px]">
            <span className="text-[12px] leading-[18px]">0 nets selected</span>
            <button disabled className={clsx(BTN_OFF, 'w-[91px]')}>Unselect</button>
        </div>
    </section>
);

// [label, has expander, tick state, has valid parts]
const COMPONENTS = [
    ['Capacitors', 1, 'dim', 1],
    ['Inductors', 1, '', 0],
    ['Resistors', 1, 'on', 1],
    ['Ports', 0, '', 0],
    ['Voltage Sources', 0, '', 0],
    ['Current Sources', 0, '', 0],
    ['Voltage Probes', 0, '', 0],
    ['Integrated Circuits', 1, 'on', 1],
    ['Input/Output', 0, '', 1],
    ['Discrete Devices', 1, 'on', 1],
    ['Pins', 0, '', 1],
    ['VRMs', 0, '', 1],
    ['Terminals', 0, '', 1],
    ['Circuits', 0, '', 1],
    ['Connectors', 1, '', 1],
];

const Expander = ({ open }) => (
    <svg width="9" height="9" viewBox="0 0 9 9" className="shrink-0"><rect x=".5" y=".5" width="8" height="8" fill="#fff" stroke="#919191" /><path d={open ? 'M2 4.500h5' : 'M2 4.500h5M4.500 2v5'} stroke="#2c4f9e" /></svg>
);

const ComponentsColumn = () => (
    <div className={clsx('flex w-[278px] shrink-0 flex-col', WIDE)}>
        <section className="flex h-[373px] flex-col bg-white">
            <PanelTitle>Components</PanelTitle>
            <ul className="min-h-0 flex-1 border border-[#9a9a9a] text-[12px]">
                {COMPONENTS.map(([name, exp, state, ok], i) => (
                    <li key={i} className="flex h-5 items-center pl-[7px]">
                        <span className="flex w-[9px] justify-center self-stretch border-[#888]">
                            {exp ? <span className="self-center"><Expander /></span> : <span className="border-l border-dotted border-[#888]" />}
                        </span>
                        <span className={clsx('border-t border-dotted border-[#888]', exp ? 'w-[6px]' : '-ml-1 w-[10px]')} />
                        <XBox checked={state !== ''} dim={state === 'dim'} label={name} />
                        <span className="ml-[2px] mr-[6px]">{ok ? <GreenCheck /> : <RedCross />}</span>
                        {name}
                    </li>
                ))}
            </ul>
            <button className="flex h-[24px] shrink-0 items-center gap-[3px] pl-3 text-[12px]">
                <svg width="16" height="14" viewBox="0 0 16 14"><circle cx="4.500" cy="4.500" r="4" fill="#dd3322" /><circle cx="11.500" cy="4.500" r="4" fill="#e9b51c" /><circle cx="8" cy="9.500" r="4" fill="#35b535" /><path d="M1 7l7 7 7-7-4 1-3 3-3-3z" fill="#2a9a2a" /></svg>
                Components
            </button>
        </section>
        <section className="mt-[6px] flex min-h-0 flex-1 flex-col bg-white">
            <PanelTitle>Results</PanelTitle>
            <ul className="flex-1 border border-[#9a9a9a] text-[12px]">
                <li className="flex h-5 items-center pl-[7px]">
                    <Expander open />
                    <span className="w-[6px] border-t border-dotted border-[#888]" />
                    <svg width="13" height="12" viewBox="0 0 13 12">
                        <defs><linearGradient id="simA" x1="0" y1="1" x2="1" y2="0"><stop offset="0" stopColor="#f00" /><stop offset=".5" stopColor="#ff0" /><stop offset="1" stopColor="#0a4" /></linearGradient></defs>
                        <rect x=".5" y=".5" width="12" height="11" fill="url(#simA)" stroke="#000" />
                    </svg>
                    <span className="ml-[7px]">Time Domain</span>
                </li>
                <li className="flex h-5 items-center pl-[30px]">
                    <span className="mb-[9px] h-[11px] w-3 border-b border-l border-dotted border-[#888]" />
                    <svg width="14" height="14" viewBox="0 0 14 14"><rect x=".5" y=".5" width="13" height="13" fill="#fff59a" stroke="#000" /><path d="M5 5h4v3H5z" fill="none" stroke="#e6c200" /><path d="M1 7l3-4 3-1.500L10 3l3 4" fill="none" stroke="#e11" strokeWidth="1.800" /><path d="M1 9h4l4 3h1l3-2" fill="none" stroke="#11d" strokeWidth="1.800" /></svg>
                </li>
            </ul>
        </section>
    </div>
);

/* ---------- layout view ---------- */

const Canvas = () => (
    <section className="relative min-w-0 flex-1 overflow-hidden border-t-[3px] border-[#8a8a8a] bg-black">
        <svg width="591" height="92" viewBox="967 159 591 92" fill="none" className="absolute left-[353px] top-0" shapeRendering="crispEdges">
            <path d="M971 159l1 16q4 8 12 11l12 1q5 3 9 8.500h146L1188 159M978 251l43-45h146l46-47" stroke="#fff" />
            <path d="M967 197.500h196v-4l35-34.500M967 206.500h203l1-8 40-39M1000 251l29-30.500h144l61-61.500M1013 251l20-21.500h143l71-70.500" stroke="#c4ad28" />
            <path d="M1018 196l54 55M1253.500 159v92M1534.500 159v92M1471 159q7 3 8 10 3 17 24 18 25 0 27-16v-12" stroke="#e59080" />
        </svg>
        <div className="absolute left-[9px] top-0 flex h-[420px] w-[344px] flex-col bg-[#f0f0f0]">
            <div className={clsx('flex h-[30px] shrink-0 items-center justify-between bg-white pl-2 pr-[10px] text-[13px] text-[#8f8f8f]', WIDE)}>
                Crosstalk Peak Voltage Viewer
                <button aria-label="Close viewer"><Cross className="text-[#999]" /></button>
            </div>
            <div className="flex flex-col items-start px-[10px] pt-3">
                <button className={clsx(BTN, 'w-[82px] text-[12px]')}>Show Voltage</button>
                <div className="mt-[22px] flex items-center gap-1 text-[12px] leading-[13px]">
                    <CheckBox id="vlim" />
                    <label htmlFor="vlim">Show values above limit</label>
                </div>
            </div>
        </div>
    </section>
);

/* ---------- right panels ---------- */

const LAYERS = [
    ['TOP', 'bg-[#c4a71c]', true],
    ['L2_VCC', 'bg-[#8f86bd]', false],
    ['L3_GND', 'bg-[#8fe0da]', false],
    ['BOTTOM', 'bg-[#e8927f]', true],
];

const LAYER_COLS = [
    <path d="M3 2.500h5l2.500 2.500v5h-5L3 8z" fill="#ff0" stroke="#000" />,
    <path d="M2.500 2.500h3v8h-3zM7.500 2.500h3v8h-3z" fill="#ff0" stroke="#000" />,
    <g><circle cx="6.500" cy="6.500" r="4" fill="#ff0" stroke="#000" /><circle cx="6.500" cy="6.500" r="1.500" fill="#fff" stroke="#000" /></g>,
    <path d="M4.500 10.500v-7l2-1.500 2 1.500v7z" fill="#ff0" stroke="#000" />,
    <g><path d="M1 4l2-2 2 2 2-2 2 2 2-2 1 1M1 7h11" fill="none" stroke="#000" /><path d="M5 7h3v5H5z" fill="#ff0" stroke="#000" strokeWidth=".6" /></g>,
];

const LayersPanel = () => (
    <section className="flex h-[342px] shrink-0 flex-col bg-white">
        <PanelTitle>Layers</PanelTitle>
        <div className={clsx('flex-1 border border-[#9a9a9a] bg-[#f0f0f0] pl-[10px] pt-[10px] text-black', MONO)}>
            <div className="flex h-[13px] items-center gap-[2px]">
                <CheckBox id="dielectrics" />
                <label htmlFor="dielectrics">Show Dielectrics</label>
            </div>
            <table className="mt-[3px] table-fixed text-left">
                <thead>
                    <tr className="h-[22px]">
                        <th className="w-[62px]" aria-label="Layer" />
                        <th className="w-[25px]"><span className="mx-auto flex h-[11px] w-[15px] items-center justify-center bg-[#ff0]"><span className="h-[5px] w-[7px] bg-[#bbb]" /></span></th>
                        <th className="w-[24px]"><svg width="11" height="11" viewBox="0 0 11 11" className="mx-auto"><rect width="11" height="11" fill="#888" /><rect x="1.500" y="1.500" width="8" height="8" fill="#bbb" stroke="#000" /><path d="M3.500 3.500l4 4M7.500 3.500l-4 4" stroke="#000" strokeWidth="1.500" /></svg></th>
                        {LAYER_COLS.map((shape, i) => (
                            <th key={i} className="w-[22px]"><svg width="13" height="13" viewBox="0 0 13 13" className="mx-auto"><rect x="1" y="1" width="11" height="11" fill="#ece9d8" />{shape}</svg></th>
                        ))}
                    </tr>
                </thead>
                <tbody>
                    {LAYERS.map(([name, color, on]) => (
                        <tr key={name} className="h-5">
                            <td>
                                <label className="flex items-center gap-[2px]">
                                    <input type="radio" name="layer" defaultChecked={name === 'TOP'} className="size-[13px] appearance-none rounded-full border border-[#333] bg-white bg-clip-content p-[2px] checked:bg-[#333]" />
                                    {name}
                                </label>
                            </td>
                            <td><span className={clsx('mx-auto flex h-[13px] w-[17px] items-center justify-center border border-black', color)}><span className="h-[5px] w-[9px] bg-white" /></span></td>
                            <td><span className="flex justify-center"><XBox checked={on} label={`${name} visible`} /></span></td>
                            {LAYER_COLS.map((_, i) => (
                                <td key={i}><span className="flex justify-center"><CheckBox checked={on} label={`${name} item ${i + 1}`} /></span></td>
                            ))}
                        </tr>
                    ))}
                </tbody>
            </table>
        </div>
    </section>
);

/* ---------- bottom ---------- */

const WARN = (n) => `Warning: drill hole of padstack "D1_${n}" will obliterate adjacent pads`;

const LOG = [
    WARN(1), WARN(2), WARN(2), WARN(2), WARN(2),
    'Appending to SIwave session log E:\\simulation\\crossstalk\\crosstalk.log',
    'Saved E:\\simulation\\crossstalk\\crosstalk.siw',
    'Appending to SIwave session log E:\\simulation\\crossstalk\\crosstalk.log',
    'Saved E:\\simulation\\crossstalk\\crosstalk.siw',
];

const Messages = () => (
    <section className="flex w-[961px] shrink-0 flex-col bg-white">
        <PanelTitle>Messages</PanelTitle>
        <div className="flex min-h-0 flex-1 flex-col border border-[#9a9a9a]">
            <div className="flex min-h-0 flex-1">
                <div className="flex-1 overflow-hidden whitespace-pre font-['Liberation_Mono',monospace] text-[12px] leading-[11px]">
                    {LOG.map((l, i) => <div key={i}>{l}</div>)}
                </div>
                <VScroll />
            </div>
            <div className="flex h-[16px] shrink-0 items-center justify-between bg-[#f0f0f0] pl-1 pr-[20px]">
                <Chevron dir="left" className="text-[#bbb]" />
                <Chevron dir="right" className="text-[#bbb]" />
            </div>
        </div>
    </section>
);

const StatusField = ({ label, value = '' }) => (
    <label className="flex items-center">
        <span className={label.length > 2 ? 'w-[25px]' : 'w-[18px]'}>{label}</span>
        <input defaultValue={value} className="h-[21px] w-[60px] border border-[#a8a8a8] bg-white px-[2px] text-[11px] text-[#444]" />
    </label>
);

const StatusBar = () => (
    <footer className="flex h-[24px] shrink-0 items-center bg-[#f6c95f] pl-[9px] pr-[18px] text-[12px] text-[#222]">
        Ready
        <div className="ml-auto flex items-center gap-[9px]">
            <StatusField label="x:" value="33.0675" />
            <StatusField label="y:" value="63.0106" />
            <StatusField label="z:" value="1.56464" />
            <StatusField label="dx:" />
            <StatusField label="dy:" />
            <label className="ml-[22px] flex items-center">
                <span className="w-[40px]">Units:</span>
                <span className="relative">
                    <select className="h-[21px] w-[90px] appearance-none border border-[#a8a8a8] bg-white px-[2px] text-[#444]"><option>mm</option></select>
                    <span className="pointer-events-none absolute right-1 top-[9px]"><Tri /></span>
                </span>
            </label>
        </div>
    </footer>
);

/* ---------- scan dialog ---------- */

const ROWS = [
    'FMC_DQ5', 'FMC_DQ6', 'FMC_DQ7', 'FMC_DQ8', 'FMC_DQ9', 'FMC_DQ10', 'FMC_DQ11', 'FMC_DQ12', 'FMC_DQ13', 'FMC_DQ14',
    'FMC_DQ15', 'FMC_SDBA0', 'FMC_SDBA1', 'FMC_SDCKE0', 'FMC_SDCLK', 'FMC_SDNBL0', 'FMC_SDNBL1', 'FMC_SDNCAS', 'FMC_SDNE0', 'FMC_SDNRAS',
];

const SCANNED = ['FMC_DQ13', 'FMC_DQ14', 'FMC_DQ15'];

const LIMITS = [
    ['Issue warning if victim FEXT is more than', '0.1'],
    ['Issue violation if victim FEXT is more than', '0.2'],
    ['Issue warning if victim NEXT is more than', '0.1'],
    ['Issue violation if victim NEXT is more than', '0.2'],
];

const TH = 'border-b border-r border-b-[#a0a0a0] border-r-[#e0e0e0] pl-[5px] font-normal whitespace-nowrap';
const TD = 'border-b border-r border-[#ececec] py-0 pl-[3px]';

const NetTable = () => (
    <table className="w-[1043px] table-fixed border-separate border-spacing-0 text-left leading-[14px]">
        <thead>
            <tr className="h-5">
                <th className="w-[17px] border-b border-[#a0a0a0]" aria-label="Current row" />
                <th className={clsx(TH, 'w-[289px]')}>Net Name</th>
                <th className={clsx(TH, 'w-[105px]')}>Scan crosstalk?</th>
                <th className={clsx(TH, 'w-[167px]')}>FEXT Warning Level</th>
                <th className={clsx(TH, 'w-[162px]')}>FEXT Violation Level</th>
                <th className={clsx(TH, 'w-[183px]')}>NEXT Warning Level</th>
                <th className={clsx(TH, 'w-[120px]')}>NEXT Violation ...</th>
            </tr>
        </thead>
        <tbody>
            {ROWS.map((r) => {
                const current = r === 'FMC_DQ13';
                return (
                    <tr key={r} className="h-4">
                        <td className="bg-[#e0e0e0] p-0 pl-[6px]">
                            {current && <svg width="6" height="9" viewBox="0 0 6 9"><path d="M0 0l5.500 4.500L0 9z" fill="#777" /></svg>}
                        </td>
                        <td className={TD}>{r}</td>
                        <td className={clsx('p-0', current ? 'bg-[#f0f0f0] outline-2 -outline-offset-1 outline-[#f8e06e]' : 'border-b border-r border-[#ececec]')}>
                            <span className="flex justify-center"><CheckBox size="sm" checked={SCANNED.includes(r)} label={`Scan ${r}`} /></span>
                        </td>
                        <td className={TD}>0.1</td>
                        <td className={TD}>0.2</td>
                        <td className={TD}>0.1</td>
                        <td className={TD}>0.2</td>
                    </tr>
                );
            })}
        </tbody>
    </table>
);

const ScanDialog = () => (
    <div role="dialog" aria-label="FEXT/NEXT Crosstalk Scan" className="absolute left-[393px] top-[248px] flex h-[743px] w-[1167px] flex-col border border-[#9a9a9a] bg-[#f0f0f0] text-[11px] text-black shadow-[2px_3px_12px_rgba(0,0,0,0.4)]">
        <div className={clsx('flex h-[30px] shrink-0 items-center bg-white pl-[7px] pr-[18px] text-[13px] text-[#999]', WIDE)}>
            <svg width="15" height="12" viewBox="0 0 15 12"><rect x=".5" y=".5" width="14" height="11" fill="#e8eef2" stroke="#aab4bb" /><rect x="2" y="2" width="6" height="8" fill="#3b8f7c" /><rect x="9" y="2" width="4" height="8" fill="#cfd8de" /></svg>
            <span className="ml-[6px] flex-1">FEXT/NEXT Crosstalk Scan</span>
            <button aria-label="Minimize dialog"><svg width="10" height="10" viewBox="0 0 10 10"><path d="M0 5.500h10" stroke="#888" /></svg></button>
            <button aria-label="Maximize dialog" className="ml-[35px]"><svg width="10" height="10" viewBox="0 0 10 10"><path d="M.5.500h9v9h-9z" stroke="#888" fill="none" /></svg></button>
            <button aria-label="Close dialog" className="ml-[36px]"><Cross className="text-[#888]" /></button>
        </div>

        <div className="mt-[10px] flex h-[21px] shrink-0 items-center pl-[13px]">
            <label htmlFor="simname" className="w-[102px]">Simulation name:</label>
            <span className="relative">
                <select id="simname" className="h-[21px] w-[300px] appearance-none border border-[#7a7a7a] bg-white px-[3px]"><option>Crosstalk Scan 1</option></select>
                <ThinChevron />
            </span>
        </div>

        <div className={clsx('mx-[14px] mt-[13px] flex h-[360px] shrink-0 flex-col border border-[#646464]', MONO)}>
            <div className="flex h-[19px] shrink-0 items-end" role="tablist">
                {['Single Ended', 'Differential', 'Extended', 'Extended Differential'].map((t, i) => (
                    <button key={t} role="tab" aria-selected={i === 0} className={clsx(i === 0 ? 'h-[19px] bg-white px-[7px]' : 'h-[17px] border border-[#dcdcdc] px-[5px]')}>{t}</button>
                ))}
            </div>
            <div className="mb-[2px] mr-[2px] flex min-h-0 flex-1 border-b border-r border-[#dcdcdc] bg-white">
                <div className="flex-1 overflow-hidden pl-px"><NetTable /></div>
                <VScroll thumb={<div className="mt-[69px] h-[50px] bg-[#cdcdcd]" />} />
            </div>
        </div>

        <div className="mt-[11px] flex h-4 shrink-0 items-center pl-[13px]">
            <span className="w-[222px]">Total single ended nets: 120</span>
            <span>Single ended nets to scan for crosstalk warnings/violations: 3</span>
        </div>
        <div className="mt-[10px] flex h-[21px] shrink-0 items-center pl-[13px]">
            <label htmlFor="regex" className="w-[61px]">Reg Ex:</label>
            <input id="regex" className="h-[20px] w-[150px] border border-[#7a7a7a] bg-white px-1" />
            <button disabled className={clsx(BTN_OFF, 'ml-3 w-[126px]')}>Select Matching Rows</button>
            <button disabled className={clsx(BTN_OFF, 'ml-[6px] w-[126px]')}>Deselect Matching Rows</button>
        </div>

        <fieldset className="ml-[14px] mt-[10px] flex h-[163px] w-[688px] shrink-0 border border-[#dcdcdc] pl-[13px] text-[#a0a0a0]">
            <legend className="ml-[-8px] px-1 leading-4 text-black">Operations</legend>
            <div className="flex">
                <label htmlFor="scanall" className="mt-[11px] w-[97px] leading-4">Scan crosstalk?</label>
                <span className="relative mt-[8px] h-[21px]">
                    <select id="scanall" disabled className="h-[21px] w-[60px] appearance-none border border-[#bfbfbf] bg-[#cccccc] px-[3px] text-[#777] opacity-100"><option>Yes</option></select>
                    <ThinChevron />
                </span>
                <button disabled className={clsx(BTN_OFF, 'ml-[43px] mt-[9px] w-[73px]')}>Update</button>
            </div>
            <div className="ml-6 mt-[9px] flex flex-col gap-[11px]">
                {LIMITS.map(([label, v], i) => (
                    <div key={i} className="flex h-[21px] items-center">
                        <label htmlFor={`limit-${i}`} className="w-[220px]">{label}</label>
                        <input id={`limit-${i}`} disabled defaultValue={v} className="h-[20px] w-[45px] border border-[#c8c8c8] bg-[#f0f0f0] px-[3px] text-[#777]" />
                        <button disabled className={clsx(BTN_OFF, 'ml-[23px] w-[73px]')}>Update</button>
                    </div>
                ))}
            </div>
        </fieldset>

        <div className="mt-[15px] flex shrink-0 items-end pl-[13px] pr-[17px]">
            <div className="flex flex-col gap-[7px]">
                <div className="flex items-center">
                    <label htmlFor="freq" className="w-[154px]">Solve crosstalk at</label>
                    <input id="freq" defaultValue="1GHz" className="h-[21px] w-[65px] border border-[#7a7a7a] bg-white px-[3px]" />
                    <button className={clsx(BTN, 'ml-[10px] w-[133px]')}>Other solver options...</button>
                </div>
                <div className="flex items-center">
                    <label htmlFor="minlen" className="w-[154px]">Min trace length to process</label>
                    <input id="minlen" defaultValue="1mm" className="h-[21px] w-[65px] border border-[#7a7a7a] bg-white px-[3px]" />
                </div>
            </div>
            <div className="ml-auto flex gap-[11px]">
                <button className={clsx(BTN, 'w-[81px]')}>Save Settings</button>
                <button className={clsx(BTN, 'w-[73px]')}>Launch</button>
                <button className={clsx(BTN, 'w-[73px]')}>Close</button>
            </div>
        </div>
        <svg width="12" height="12" viewBox="0 0 12 12" className="absolute bottom-0 right-0"><path d="M0 12L12 0M4 12l8-8M8 12l4-4" stroke="#999" strokeWidth="1.300" /></svg>
    </div>
);

/* ---------- red notes drawn over the windows ---------- */

const Notes = () => (
    <div className="pointer-events-none absolute inset-0 overflow-hidden leading-7 text-[#ff2010]">
        <div className="absolute left-[903px] top-[58px] h-[77px] w-[81px] rounded-sm border-[3px] border-[#ff2010]" />
        <div className="absolute left-[412px] top-[481px] h-[60px] w-[1180px] rounded-sm border-[3px] border-[#ff2010]" />
        <div className="absolute left-[1378px] top-[947px] h-[45px] w-[88px] rounded-sm border-[3px] border-[#ff2010]" />
        <svg width="20" height="90" viewBox="0 0 20 90" className="absolute left-[949px] top-[146px]"><path d="M1 0h1l12 73 4-2-5 17L2 75l4 0z" fill="#ff2010" /></svg>
        <svg width="216" height="314" viewBox="0 0 216 314" className="absolute left-[1184px] top-[623px]"><path d="M1 2L200 302l-3 2 17 9-2-19-3 4L3 0z" fill="#ff2010" /></svg>
        <span className={clsx('absolute left-[730px] top-[193px] text-[22px]', WIDE)}>Frequency Domain</span>
        <span className="absolute left-[911px] top-[567px] whitespace-nowrap font-['Noto_Sans_CJK_SC',sans-serif] text-[21px]">选择网络，设置网络间的耦合度</span>
        <span className="absolute right-[11px] top-[1009px] text-[16px] text-white/80 [text-shadow:1px_1px_1px_#999]">https://blog.csdn.net/weixin_41808092</span>
    </div>
);

const App = () => (
    <div className="relative flex h-screen flex-col overflow-hidden bg-[#ededed] font-['Roboto','Noto_Sans_CJK_SC',sans-serif] text-black">
        <Header />
        <Ribbon />
        <main className="flex min-h-0 flex-1 flex-col gap-[6px]">
            <div className="flex min-h-0 flex-1 gap-[6px] bg-[#f5f5f5]">
                <div className="flex w-[324px] shrink-0 flex-col gap-[6px] bg-[#ededed]">
                    <div className="flex h-[378px] shrink-0 gap-[6px] bg-[#f5f5f5]">
                        <PowerPanel />
                        <NetsPanel />
                    </div>
                    <SelectedNets />
                </div>
                <ComponentsColumn />
                <Canvas />
                <div className="flex w-[356px] shrink-0 flex-col gap-[6px] bg-[#ededed]">
                    <LayersPanel />
                    <section className="flex-1 bg-white"><PanelTitle>Properties</PanelTitle></section>
                </div>
            </div>
            <div className="flex h-[170px] shrink-0 gap-[6px] bg-[#f5f5f5]">
                <Messages />
                <section className="flex min-w-0 flex-1 flex-col bg-white">
                    <PanelTitle />
                    <div className="mt-[28px] flex-1 border border-b-0 border-[#9a9a9a]" />
                </section>
            </div>
        </main>
        <StatusBar />
        <ScanDialog />
        <Notes />
    </div>
);

export default App;
